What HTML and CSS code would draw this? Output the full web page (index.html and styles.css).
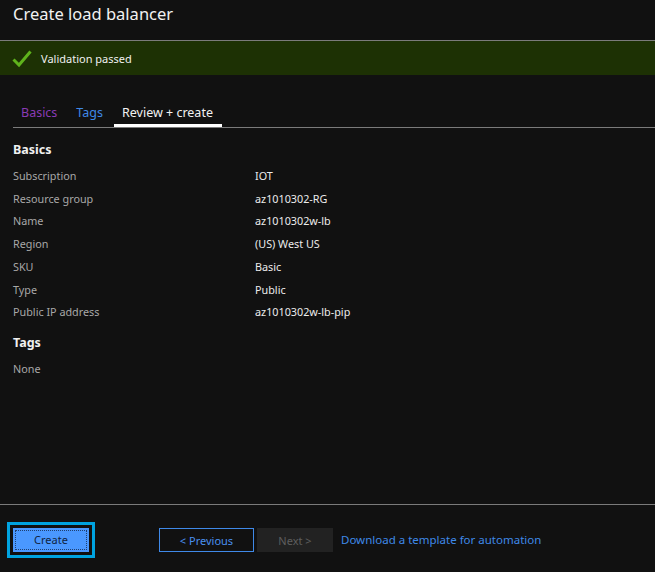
FILE: index.html
```html
<!DOCTYPE html>
<html lang="en">
<head>
<meta charset="utf-8">
<title>Create load balancer</title>
<link rel="stylesheet" href="styles.css">
</head>
<body>
<div class="page">
  <header class="header">
    <h1 class="title">Create load balancer</h1>
  </header>
  <div class="banner">
    <svg class="check" width="20" height="18" viewBox="0 0 20 18" aria-hidden="true">
      <path d="M1.5 9.5 L7 15 L18.5 1.5" fill="none" stroke="#5fb31c" stroke-width="3"/>
    </svg>
    <span class="banner-text">Validation passed</span>
  </div>
  <main class="main">
    <nav class="tabs">
      <span class="tab tab-visited">Basics</span>
      <span class="tab tab-link">Tags</span>
      <span class="tab tab-active">Review + create</span>
    </nav>
    <section class="section">
      <h2 class="section-title">Basics</h2>
      <div class="rows">
        <div class="row"><span class="label">Subscription</span><span class="value">IOT</span></div>
        <div class="row"><span class="label">Resource group</span><span class="value">az1010302-RG</span></div>
        <div class="row"><span class="label">Name</span><span class="value">az1010302w-lb</span></div>
        <div class="row"><span class="label">Region</span><span class="value">(US) West US</span></div>
        <div class="row"><span class="label">SKU</span><span class="value">Basic</span></div>
        <div class="row"><span class="label">Type</span><span class="value">Public</span></div>
        <div class="row"><span class="label">Public IP address</span><span class="value">az1010302w-lb-pip</span></div>
      </div>
    </section>
    <section class="section section-tags">
      <h2 class="section-title">Tags</h2>
      <div class="rows">
        <div class="row"><span class="label">None</span></div>
      </div>
    </section>
  </main>
  <footer class="footer">
    <button class="btn btn-primary" type="button"><span class="btn-inner">Create</span></button>
    <button class="btn btn-outline" type="button">&lt; Previous</button>
    <button class="btn btn-disabled" type="button">Next &gt;</button>
    <a class="link" href="#">Download a template for automation</a>
  </footer>
</div>
</body>
</html>
```

FILE: styles.css
```css
html, body {
  margin: 0;
  padding: 0;
  background: #111111;
}

body {
  font-family: "Noto Sans", "Open Sans", sans-serif;
  color: #e6e6e6;
}

.page {
  display: flex;
  flex-direction: column;
  height: 572px;
}

.header {
  height: 40px;
  border-bottom: 1px solid #7b7b7b;
  box-sizing: content-box;
  display: flex;
  align-items: flex-start;
}

.title {
  margin: 0;
  padding: 1px 0 0 13px;
  font-size: 16.5px;
  font-weight: 400;
  line-height: 25px;
  color: #f2f2f2;
}

.banner {
  height: 34px;
  background: #1d3104;
  display: flex;
  align-items: center;
  padding-left: 12px;
}

.check {
  display: block;
  margin-top: 1px;
}

.banner-text {
  margin-left: 9px;
  font-size: 11px;
  color: #f0f0f0;
}

.main {
  flex: 1;
  padding: 28px 0 0 13px;
}

.tabs {
  display: flex;
  gap: 3px;
  border-bottom: 1px solid #7b7b7b;
  height: 24px;
}

.tab {
  padding: 0 8px;
  font-size: 12.5px;
  line-height: 19px;
  height: 21px;
  box-sizing: border-box;
}

.tab-visited { color: #8a3bb5; }
.tab-link { color: #3f89e8; }
.tab-active {
  color: #f2f2f2;
  height: 24px;
  border-bottom: 3px solid #ffffff;
  padding: 0 9px 0 8px;
}

.section {
  padding-top: 13px;
}

.section-title {
  margin: 0;
  font-size: 12.5px;
  font-weight: 700;
  line-height: 17px;
  color: #f0f0f0;
}

.rows {
  padding-top: 7px;
}

.row {
  display: grid;
  grid-template-columns: 242px 1fr;
  font-size: 10.8px;
  line-height: 22.7px;
}

.label { color: #a8a8a8; }
.value { color: #ececec; }

.section-tags {
  padding-top: 10px;
}

.footer {
  height: 68px;
  border-top: 1px solid #7b7b7b;
  display: flex;
  align-items: flex-start;
  padding: 23px 0 0 13px;
  box-sizing: border-box;
}

.btn {
  font-family: inherit;
  font-size: 11px;
  height: 24px;
  box-sizing: border-box;
  margin: 0;
  border: 0;
  padding: 0;
  cursor: pointer;
}

.btn-primary {
  width: 76px;
  background: #4a98ff;
  color: #10243f;
  outline: 3px solid #00a3e0;
  outline-offset: 3px;
  padding: 2px;
}

.btn-inner {
  display: block;
  height: 100%;
  border: 1px dotted #1f3f70;
  box-sizing: border-box;
  line-height: 18px;
}

.btn-outline {
  margin-left: 70px;
  width: 95px;
  background: transparent;
  border: 1px solid #3f89e8;
  color: #4a90ef;
}

.btn-disabled {
  margin-left: 3px;
  width: 76px;
  background: #222222;
  color: #5e5e5e;
}

.link {
  margin-left: 8px;
  font-size: 11.5px;
  line-height: 24px;
  color: #3f89e8;
  text-decoration: none;
}
```
